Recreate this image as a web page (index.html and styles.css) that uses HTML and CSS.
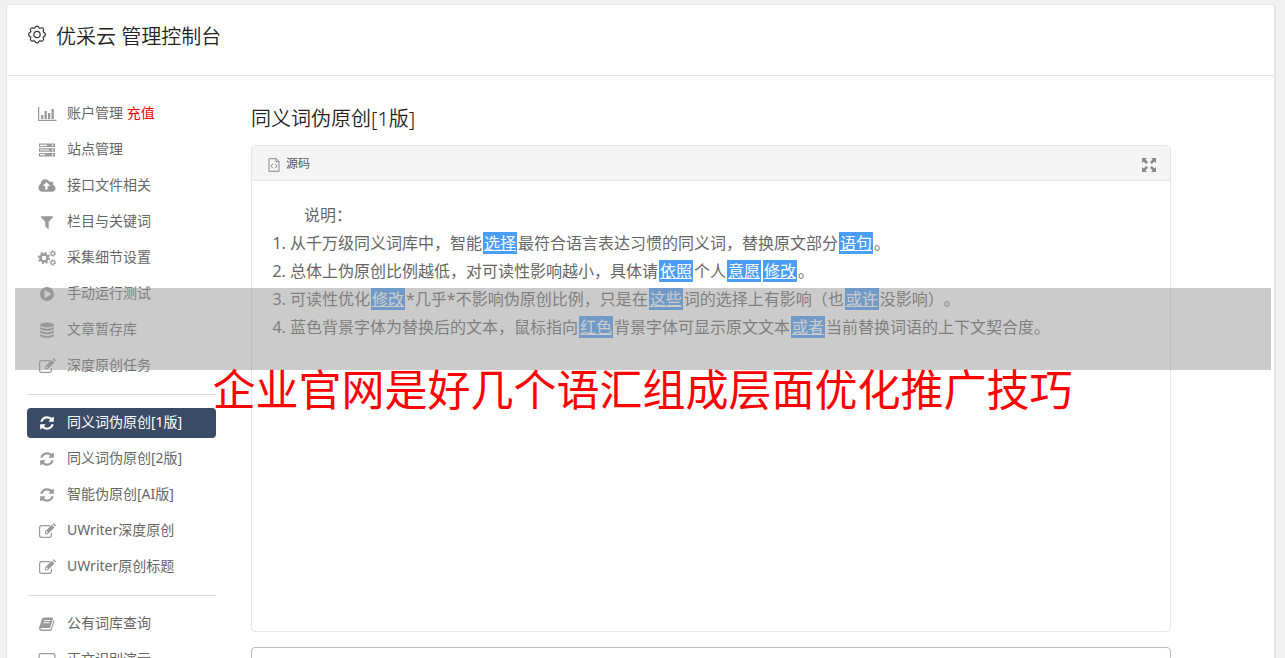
FILE: index.html
```html
<!DOCTYPE html>
<html lang="zh-CN">
<head>
    <meta charset="UTF-8">
    <meta name="viewport" content="width=device-width, initial-scale=1">
    <title>优采云 管理控制台</title>
    <link rel="stylesheet" href="styles.css">
</head>
<body>
    <!-- 图标 -->
    <svg class="sprite" aria-hidden="true">
        <symbol id="i-chart" viewBox="0 0 20 16">
            <path d="M1 1h1.200v12.800H19.500V15H1z"/>
            <path d="M4 9h2.300v4H4zM7.500 5h2.300v8H7.500zM11 7h2.300v6H11zM14.500 3h2.300v10h-2.300z"/>
        </symbol>
        <symbol id="i-server" viewBox="0 0 20 16">
            <path fill-rule="evenodd" d="M2 1.500h16v3.600H2zM3 2.700v1.200h7V2.700zM14.800 2.500v1.500h1.500V2.500zM2 6.200h16v3.600H2zM3 7.400v1.200h9V7.400zM14.800 7.200v1.500h1.500V7.200zM2 10.900h16v3.600H2zM3 12.100v1.200h5v-1.200zM14.800 11.900v1.500h1.500v-1.500z"/>
        </symbol>
        <symbol id="i-cloud" viewBox="-64 0 1920 1792">
            <path d="M1216 864q0-14-9-23l-352-352q-9-9-23-9t-23 9l-351 351q-10 12-10 24 0 14 9 23t23 9h224v352q0 13 9.500 22.500t22.500 9.500h192q13 0 22.500-9.500t9.500-22.500v-352h224q13 0 22.500-9.500t9.500-22.500zm640 288q0 159-112.500 271.500t-271.500 112.500h-1088q-185 0-316.500-131.500t-131.500-316.500q0-130 70-240t188-165q-2-30-2-43 0-212 150-362t362-150q156 0 285.500 87t188.500 231q71-62 166-62 106 0 181 75t75 181q0 76-41 138 130 31 213.500 135.500t83.500 238.500z"/>
        </symbol>
        <symbol id="i-filter" viewBox="0 0 1792 1792">
            <path d="M1595 295q17 41-14 72l-493 493v742q0 42-39 59-13 5-25 5-27 0-45-19l-256-256q-19-19-19-45v-486l-493-493q-31-31-14-72 17-39 59-39h1280q42 0 59 39z"/>
        </symbol>
        <symbol id="i-cogs" viewBox="0 0 20 16">
            <g fill="none" stroke="currentColor">
                <circle cx="7" cy="8" r="3.500" stroke-width="2.400"/>
                <circle cx="7" cy="8" r="5.200" stroke-width="1.800" stroke-dasharray="2.040 2.040"/>
                <circle cx="15.800" cy="3.500" r="1.800" stroke-width="1.200"/>
                <circle cx="15.800" cy="3.500" r="2.800" stroke-width="1" stroke-dasharray="1.470 1.460"/>
                <circle cx="15.800" cy="12.500" r="1.800" stroke-width="1.200"/>
                <circle cx="15.800" cy="12.500" r="2.800" stroke-width="1" stroke-dasharray="1.470 1.460"/>
            </g>
        </symbol>
        <symbol id="i-play" viewBox="0 0 20 16">
            <path fill-rule="evenodd" d="M10 1a7 7 0 1 1 0 14a7 7 0 1 1 0-14zM7.500 4.400v7.200q0 .6.6.3l5.700-3.400q.6-.5 0-.9L8.100 4.200q-.6-.3-.6.2z"/>
        </symbol>
        <symbol id="i-database" viewBox="0 0 20 16">
            <ellipse cx="10" cy="3" rx="7" ry="2.400"/>
            <path d="M3 5q2.500 1.800 7 1.800T17 5v1.700q-1.500 2-7 2t-7-2zM3 8.600q2.500 1.800 7 1.800t7-1.800v1.700q-1.500 2-7 2t-7-2zM3 12.200Q5.500 14 10 14t7-1.800v1.500q-1.500 2-7 2t-7-2z"/>
        </symbol>
        <symbol id="i-edit" viewBox="0 0 20 16">
            <path fill="none" stroke="currentColor" stroke-width="1.200" d="M13 2.600H4.700Q2.600 2.600 2.600 4.700v7.600q0 2.100 2.100 2.100h7.600q2.100 0 2.100-2.100V10"/>
            <path fill-rule="evenodd" d="M8 8.500L14.800 1.700l2.700 2.700-6.800 6.800H8zM9 9v1.200h1.100l.8-.8-1.100-1.100zM15.500 1l.7-.6q.4-.4.900 0l1.600 1.600q.4.500 0 .9l-.6.700z"/>
        </symbol>
        <symbol id="i-refresh" viewBox="0 0 1792 1792">
            <path d="M1639 1056q0 5-1 7-64 268-268 434.500t-478 166.500q-146 0-282.500-55t-243.500-157l-129 129q-19 19-45 19t-45-19-19-45v-448q0-26 19-45t45-19h448q26 0 45 19t19 45-19 45l-137 137q71 66 161 102t187 36q134 0 250-65t186-179q11-17 53-117 8-23 30-23h192q13 0 22.500 9.500t9.500 22.500zm25-800v448q0 26-19 45t-45 19h-448q-26 0-45-19t-19-45 19-45l138-138q-148-137-349-137-134 0-250 65t-186 179q-11 17-53 117-8 23-30 23h-199q-13 0-22.500-9.500t-9.500-22.500v-7q65-268 270-434.500t480-166.500q146 0 284 55.500t245 156.500l130-129q19-19 45-19t45 19 19 45z"/>
        </symbol>
        <symbol id="i-book" viewBox="0 0 20 16">
            <path fill-rule="evenodd" d="M7 1.500h8.200q1.100 0 .8 1.100l-2.600 8.400q-.3 1-1.400 1H4.500q-1 0-1 .6 0 .9 1.300.9h8q.9 0 1.200-.9L16.700 4q1 .3.700 1.300l-2.600 8.200q-.4 1.500-1.900 1.500H5q-2.800 0-3-2.500 0-.6.300-1.300L5 3q.5-1.500 2-1.500zM7.300 4l-.3.900h6.300l.3-.9zM6.600 6.300l-.3.900h6.300l.3-.9z"/>
        </symbol>
        <symbol id="i-screen" viewBox="0 0 20 16">
            <path fill="none" stroke="currentColor" stroke-width="1.200" d="M3.500 1.600h13q1.400 0 1.400 1.400v7q0 1.400-1.400 1.400h-13Q2.100 11.400 2.100 10V3q0-1.400 1.400-1.400z"/>
            <path d="M7 12h6v3H7z"/>
        </symbol>
        <symbol id="i-gear" viewBox="0 0 20 20">
            <path fill="none" stroke="currentColor" stroke-width="1.200" stroke-linejoin="round" d="M8 2.500Q8.400 1.200 10 1.200t2 1.300q.4 1.100 1.500.6 1.400-.8 2.500.3t.3 2.500q-.5 1.100.6 1.500 1.500.5 1.500 2.100t-1.500 2.100q-1.100.4-.6 1.500.8 1.400-.3 2.500t-2.500.3q-1.100-.5-1.500.6-.4 1.300-2 1.300t-2-1.300q-.4-1.100-1.500-.6-1.400.8-2.500-.3t-.3-2.500q.5-1.100-.6-1.500-1.500-.5-1.500-2.100t1.500-2.100q1.100-.4.600-1.500-.8-1.400.3-2.500t2.500-.3q1.100.5 1.500-.6z"/>
            <circle cx="10" cy="9.500" r="3.200" fill="none" stroke="currentColor" stroke-width="1.200"/>
        </symbol>
        <symbol id="i-source" viewBox="0 0 12 14">
            <path fill="none" stroke="currentColor" d="M1 .7h7.300L11 3.500v9.800H1zM8 .7v3h3M5 5.800L2.900 8 5 10.200M7 5.800L9.100 8 7 10.200"/>
        </symbol>
        <symbol id="i-expand" viewBox="0 0 14 14">
            <path d="M0 0h5L3.400 1.600 6 4.200 4.200 6 1.600 3.400 0 5zM14 0v5l-1.600-1.600L9.800 6 8 4.200l2.600-2.600L9 0zM0 14V9l1.600 1.600L4.200 8 6 9.800l-2.600 2.600L5 14zM14 14H9l1.600-1.600L8 9.800 9.800 8l2.600 2.600L14 9z"/>
        </symbol>
    </svg>

    <div class="console">
        <header class="console-header">
            <svg class="gear"><use href="#i-gear"/></svg>
            <h1>优采云 管理控制台</h1>
        </header>

        <div class="console-body">
            <nav class="sidebar">
                <a class="nav-item" href="#"><svg><use href="#i-chart"/></svg><span>账户管理 <em>充值</em></span></a>
                <a class="nav-item" href="#"><svg><use href="#i-server"/></svg>站点管理</a>
                <a class="nav-item" href="#"><svg><use href="#i-cloud"/></svg>接口文件相关</a>
                <a class="nav-item" href="#"><svg><use href="#i-filter"/></svg>栏目与关键词</a>
                <a class="nav-item" href="#"><svg><use href="#i-cogs"/></svg>采集细节设置</a>
                <a class="nav-item" href="#"><svg><use href="#i-play"/></svg>手动运行测试</a>
                <a class="nav-item" href="#"><svg><use href="#i-database"/></svg>文章暂存库</a>
                <a class="nav-item" href="#"><svg><use href="#i-edit"/></svg>深度原创任务</a>
                <hr>
                <a class="nav-item active" href="#"><svg><use href="#i-refresh"/></svg>同义词伪原创[1版]</a>
                <a class="nav-item" href="#"><svg><use href="#i-refresh"/></svg>同义词伪原创[2版]</a>
                <a class="nav-item" href="#"><svg><use href="#i-refresh"/></svg>智能伪原创[AI版]</a>
                <a class="nav-item" href="#"><svg><use href="#i-edit"/></svg>UWriter深度原创</a>
                <a class="nav-item" href="#"><svg><use href="#i-edit"/></svg>UWriter原创标题</a>
                <hr>
                <a class="nav-item" href="#"><svg><use href="#i-book"/></svg>公有词库查询</a>
                <a class="nav-item" href="#"><svg><use href="#i-screen"/></svg>正文识别演示</a>
            </nav>

            <main class="content">
                <h2>同义词伪原创[1版]</h2>

                <section class="editor">
                    <div class="toolbar">
                        <button type="button" class="source"><svg><use href="#i-source"/></svg>源码</button>
                        <button type="button" class="expand" aria-label="全屏"><svg><use href="#i-expand"/></svg></button>
                    </div>
                    <div class="editor-text">
                        <p>说明：</p>
                        <ol>
                            <li>从千万级同义词库中，智能<mark>选择</mark>最符合语言表达习惯的同义词，替换原文部分<mark>语句</mark>。</li>
                            <li>总体上伪原创比例越低，对可读性影响越小，具体请<mark>依照</mark>个人<mark>意愿</mark><mark>修改</mark>。</li>
                            <li>可读性优化<mark>修改</mark>*几乎*不影响伪原创比例，只是在<mark>这些</mark>词的选择上有影响（也<mark>或许</mark>没影响）。</li>
                            <li>蓝色背景字体为替换后的文本，鼠标指向<mark>红色</mark>背景字体可显示原文文本<mark>或者</mark>当前替换词语的上下文契合度。</li>
                        </ol>
                    </div>
                </section>

                <textarea class="result" aria-label="结果"></textarea>
            </main>
        </div>
    </div>

    <div class="banner-bar"></div>
    <div class="banner-text">企业官网是好几个语汇组成层面优化推广技巧</div>
</body>
</html>
```
FILE: styles.css
```css
* {
    margin: 0;
    padding: 0;
    box-sizing: border-box;
}

body {
    position: relative;
    height: 100vh;
    overflow: hidden;
    padding: 4px 9px 0 6px;
    background: #f1f1f1;
    color: #666;
    font-family: 'Noto Sans', 'Noto Sans CJK SC', sans-serif;
    font-size: 14px;
    text-spacing-trim: space-all;
}

svg {
    display: block;
    flex: none;
    fill: currentColor;
}

.sprite {
    position: absolute;
    width: 0;
    height: 0;
}

.console {
    background: #fff;
    border: 1px solid #e5e5e5;
    border-right-width: 2px;
    border-radius: 4px;
}

/* 顶部 */
.console-header {
    display: flex;
    gap: 9px;
    height: 71px;
    padding: 17px 20px;
    border-bottom: 1px solid #e5e5e5;
    color: #333;
}

.gear {
    width: 20px;
    height: 20px;
    margin-top: 3px;
}

h1,
h2 {
    color: #222;
    font-size: 20px;
    font-weight: 350;
    line-height: 30px;
}

.console-body {
    display: flex;
    gap: 35px;
    padding: 23px 20px;
}

/* 左侧菜单 */
.sidebar {
    flex: none;
    width: 189px;
}

.nav-item {
    display: flex;
    align-items: flex-start;
    gap: 10px;
    height: 30px;
    margin-bottom: 6px;
    padding: 0 10px;
    border-radius: 4px;
    color: #666;
    line-height: 28px;
    text-decoration: none;
    white-space: nowrap;
}

.nav-item svg {
    width: 20px;
    height: 16px;
    margin-top: 7px;
    color: #999;
}

.nav-item em {
    color: #f00;
    font-style: normal;
}

.nav-item.active,
.nav-item.active svg {
    color: #fff;
}

.nav-item.active {
    background: #3a4b66;
}

.sidebar hr {
    margin: 13px 0;
    border: 0;
    border-top: 1px solid #ddd;
}

.nav-item:has(+ hr) {
    margin-bottom: 0;
}

/* 内容区 */
.content {
    flex: 1;
    max-width: 920px;
    padding-top: 5px;
}

h2 {
    margin-bottom: 11px;
}

.editor {
    border: 1px solid #e5e5e5;
    border-radius: 4px;
}

.toolbar {
    display: flex;
    align-items: center;
    justify-content: space-between;
    height: 35px;
    padding: 0 14px 0 16px;
    background: #f4f4f4;
    border-bottom: 1px solid #e5e5e5;
}

.toolbar button {
    display: flex;
    align-items: center;
    gap: 6px;
    border: 0;
    background: none;
    color: #555;
    font-family: inherit;
    font-size: 12px;
}

.toolbar svg {
    margin-top: 4px;
    color: #888;
}

.source svg {
    width: 12px;
    height: 14px;
}

.expand svg {
    width: 14px;
    height: 14px;
}

.editor-text {
    min-height: 450px;
    padding: 20px;
    font-size: 16px;
    line-height: 28px;
}

.editor-text p {
    text-indent: 2em;
}

.editor-text ol {
    padding-left: 18px;
}

.editor-text mark {
    margin: 0 1px;
    padding: 0 1px;
    background: #4a9df8;
    color: #fff;
    text-decoration: underline;
}

.result {
    display: block;
    width: 100%;
    height: 120px;
    margin-top: 15px;
    border: 1px solid #bbb;
    border-radius: 4px;
    resize: none;
}

/* 横幅 */
.banner-bar {
    position: absolute;
    top: 288px;
    left: 15px;
    right: 14px;
    height: 82px;
    background: rgba(151, 151, 151, 0.5);
}

.banner-text {
    position: absolute;
    top: 360px;
    left: 0;
    right: 0;
    color: #f00;
    font-size: 43px;
    line-height: 60px;
    text-align: center;
    white-space: nowrap;
}
```
